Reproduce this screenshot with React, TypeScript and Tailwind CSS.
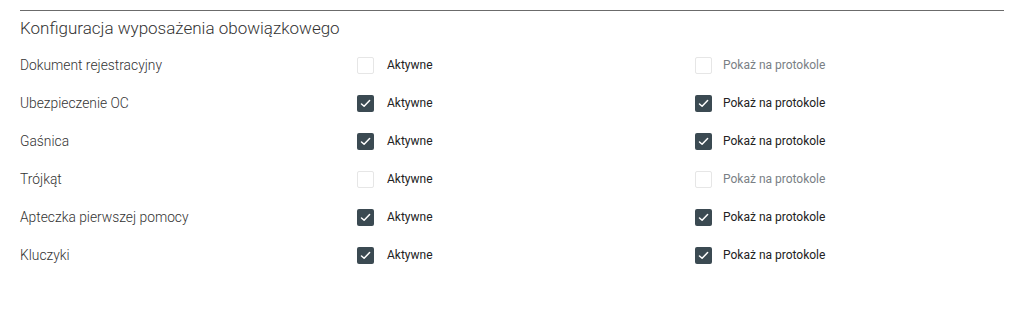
import React from "react";

const rows: { name: string; active: boolean; show: boolean }[] = [
  { name: "Dokument rejestracyjny", active: false, show: false },
  { name: "Ubezpieczenie OC", active: true, show: true },
  { name: "Gaśnica", active: true, show: true },
  { name: "Trójkąt", active: false, show: false },
  { name: "Apteczka pierwszej pomocy", active: true, show: true },
  { name: "Kluczyki", active: true, show: true },
];

function Box({ checked }: { checked: boolean }) {
  return checked ? (
    <span className="w-[17px] h-[17px] rounded-[2px] bg-[#3b4a52] flex items-center justify-center shrink-0">
      <svg width="11" height="9" viewBox="0 0 11 9" fill="none">
        <path d="M1.5 5 L4.1 7.3 L9.6 1.6" stroke="white" strokeWidth="1.5" strokeLinecap="round" strokeLinejoin="round" />
      </svg>
    </span>
  ) : (
    <span className="w-[17px] h-[17px] rounded-[2px] border border-[#e6e6e6] bg-white shrink-0" />
  );
}

export default function App() {
  return (
    <div className="w-[1024px] h-[315px] bg-white px-5 pt-[10px]" style={{ fontFamily: "Roboto, 'Noto Sans', sans-serif" }}>
      <div className="border-t border-[#6b6b6b]" />
      <div className="mt-[5px] text-[17px] leading-[24px] font-light text-[#333]">Konfiguracja wyposażenia obowiązkowego</div>
      <div className="mt-[15px] flex flex-col gap-[20px]">
        {rows.map((r) => (
          <div key={r.name} className="grid grid-cols-[337px_338px_1fr] items-center h-[18px]">
            <span className="text-[13.8px] font-light text-[#333]">{r.name}</span>
            <div className="flex items-center gap-[13px]">
              <Box checked={r.active} />
              <span className="text-[12px] text-[#222]">Aktywne</span>
            </div>
            <div className="flex items-center gap-[11px]">
              <Box checked={r.show} />
              <span className={"text-[12px] " + (r.show ? "text-[#222]" : "text-[#7a7f85]")}>Pokaż na protokole</span>
            </div>
          </div>
        ))}
      </div>
    </div>
  );
}
